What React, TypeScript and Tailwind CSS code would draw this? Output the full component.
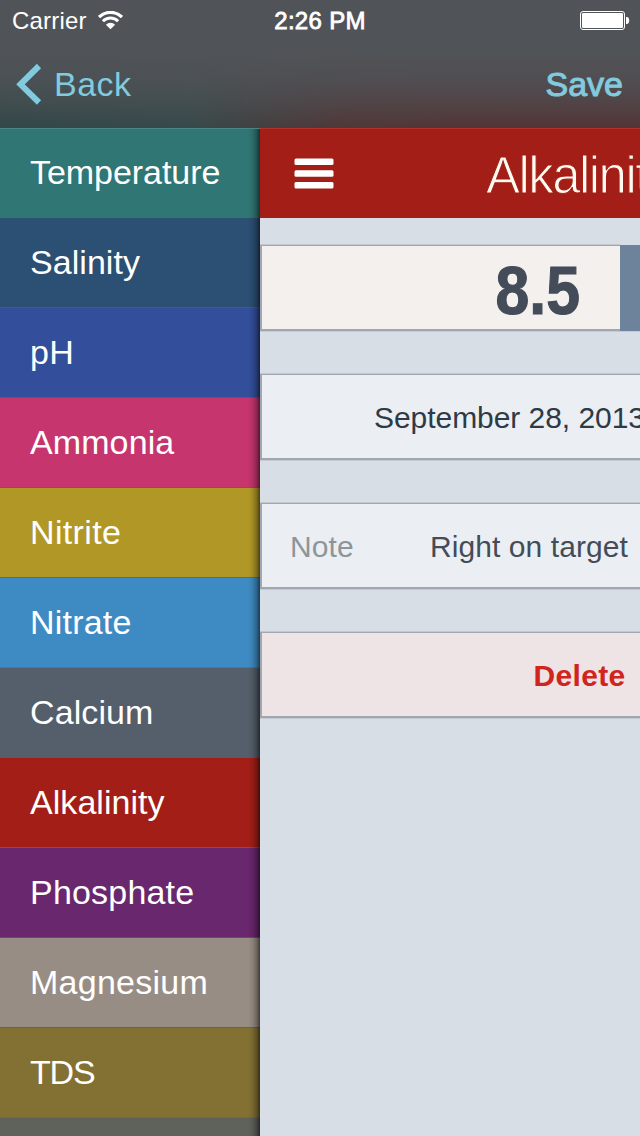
import type { ReactNode } from "react";

type Item = { name: string; color: string; line: string; spacing: string };

const items: Item[] = [
  { name: "Temperature", color: "bg-[#2f7674]", line: "border-[#4a6b68]", spacing: "tracking-[-0.05px]" },
  { name: "Salinity", color: "bg-[#2c4f74]", line: "border-[#4f5a66]", spacing: "tracking-[0.05px]" },
  { name: "pH", color: "bg-[#334f9b]", line: "border-[#5a5873]", spacing: "tracking-[0.4px]" },
  { name: "Ammonia", color: "bg-[#c6356e]", line: "border-[#83505f]", spacing: "tracking-[0.1px]" },
  { name: "Nitrite", color: "bg-[#b19826]", line: "border-[#6f6a4e]", spacing: "tracking-[0.35px]" },
  { name: "Nitrate", color: "bg-[#3e8bc3]", line: "border-[#52768e]", spacing: "tracking-[0.2px]" },
  { name: "Calcium", color: "bg-[#555e6b]", line: "border-[#66584f]", spacing: "tracking-[0.1px]" },
  { name: "Alkalinity", color: "bg-[#a31e16]", line: "border-[#7b5151]", spacing: "tracking-[0.05px]" },
  { name: "Phosphate", color: "bg-[#69276d]", line: "border-[#645064]", spacing: "tracking-[0.2px]" },
  { name: "Magnesium", color: "bg-[#988d84]", line: "border-[#65625f]", spacing: "tracking-[0.25px]" },
  { name: "TDS", color: "bg-[#837133]", line: "border-[#726b42]", spacing: "tracking-[-1.2px]" },
];

function StatusBar() {
  return (
    <div className="flex h-10 items-center text-white">
      <div className="flex w-[260px] items-center pl-3">
        <span className="w-[86px] pt-px text-[24px] leading-10 tracking-[0.2px]">Carrier</span>
        <svg className="h-[19px] w-[25px]" viewBox="0 0 25 19" fill="none">
          <path d="M1 6.100a16.300 16.300 0 0 1 23 0" stroke="white" strokeWidth="3.200" />
          <path d="M4.900 10.200a10.800 10.800 0 0 1 15.200 0" stroke="white" strokeWidth="3" />
          <path d="M7.900 13.700a6.300 6.300 0 0 1 9.200 0L12.500 18.200z" fill="white" />
        </svg>
      </div>
      <div className="w-[120px] pt-px text-center text-[24px] leading-10 tracking-[0.3px] [-webkit-text-stroke:0.8px_white]">
        2:26 PM
      </div>
      <div className="flex flex-1 justify-end pr-[10px]">
        <svg className="h-5 w-[50px]" viewBox="0 0 50 20" fill="none">
          <rect x="0.5" y="1.5" width="44" height="18" rx="2.5" stroke="white" />
          <rect x="2" y="3" width="41" height="15" rx="1.2" fill="white" />
          <path d="M46 7h.8c1.6 0 2.4 1.6 2.4 3.5S48.400 14 46.800 14H46z" fill="white" />
        </svg>
      </div>
    </div>
  );
}

function NavBar() {
  return (
    <div className="flex h-[88px] items-center justify-between pr-[17px] pl-4 text-[#82cade]">
      <div className="flex items-center gap-3">
        <svg className="h-[42px] w-[26px]" viewBox="0 0 26 42" fill="none">
          <path d="M23 3L4.500 21.300L23 39.500" stroke="#82cade" strokeWidth="6" />
        </svg>
        <span className="text-[34px] leading-10 tracking-[0.45px]">Back</span>
      </div>
      <span className="text-[34px] leading-10 [-webkit-text-stroke:1px_#82cade]">Save</span>
    </div>
  );
}

function Card({ tone, children }: { tone: string; children: ReactNode }) {
  return (
    <div
      className={`flex h-[86px] w-[640px] items-center border-t border-b-2 border-l-2 border-[#a0a7b3] pt-0.5 shadow-[0_1px_0_#c5cad1,0_-1px_0_#c3c8cf] ${tone}`}
    >
      {children}
    </div>
  );
}

export default function App() {
  return (
    <div className="flex h-[1136px] w-[640px] flex-col overflow-hidden bg-[#d7dee6] font-['Liberation_Sans',Arial,sans-serif]">
      <header className="h-32 shrink-0 bg-[linear-gradient(180deg,#505357_0%,#505357_42%,rgba(80,83,87,0.85)_60%,rgba(80,83,87,0.5)_80%,rgba(80,83,87,0)_100%),linear-gradient(90deg,#324748_0%,#37494a_30%,#424041_40%,#4f3839_52%,#533536_70%,#533536_100%)]">
        <StatusBar />
        <NavBar />
      </header>

      <div className="flex min-h-0 flex-1">
        <nav className="relative w-[260px] shrink-0 overflow-hidden bg-[#5f615b]">
          <div className="absolute inset-x-0 top-0 z-10 h-px bg-[#488685]" />
          {items.map((item) => (
            <div key={item.name} className={`flex h-[90px] items-center border-b pb-0.5 pl-[30px] ${item.color} ${item.line}`}>
              <span className={`text-[34px] leading-10 text-white ${item.spacing}`}>{item.name}</span>
            </div>
          ))}
          <div className="absolute inset-y-0 right-0 w-[12px] bg-[linear-gradient(90deg,rgba(0,0,0,0)_0%,rgba(0,0,0,0.08)_35%,rgba(0,0,0,0.27)_70%,rgba(0,0,0,0.58)_100%)]" />
        </nav>

        <main className="min-w-0 flex-1 overflow-hidden">
          <div className="flex h-[90px] w-[640px] items-center border-t border-[#b33229] bg-[#a31e16]">
            <svg className="ml-[34px] h-8 w-10 shrink-0" viewBox="0 0 40 32">
              <rect x="0.500" y="0.500" width="39" height="6.500" rx="1.500" fill="white" />
              <rect x="0.500" y="12.200" width="39" height="6.500" rx="1.500" fill="white" />
              <rect x="0.500" y="23.900" width="39" height="6.500" rx="1.500" fill="white" />
            </svg>
            <h1 className="ml-[152px] pt-[4px] text-[51px] leading-[60px] font-normal tracking-[-1.55px] whitespace-nowrap text-[#fffbf0] [-webkit-text-stroke:1.100px_#a31e16]">
              Alkalinity
            </h1>
          </div>

          <div className="flex flex-col gap-[43px] pt-[27px]">
            <div className="flex w-[640px]">
              <div className="flex h-[86px] w-[360px] items-center justify-end border-t border-b-2 border-l-2 border-[#a0a7b3] bg-[#f4f0ed] pr-[40px] shadow-[0_1px_0_#c5cad1,0_-1px_0_#c3c8cf]">
                <span className="origin-right scale-x-[0.88] pt-[7px] text-[69px] leading-[80px] font-bold text-[#434c58] [-webkit-text-stroke:1.200px_#434c58]">
                  8.5
                </span>
              </div>
              <div className="h-[86px] flex-1 bg-[#6d829b] shadow-[0_1px_0_#c5cad1]" />
            </div>
            <Card tone="bg-[#ebeff3]">
              <span className="ml-[112px] text-[30px] leading-10 tracking-[-0.05px] whitespace-nowrap text-[#2e3a45]">
                September 28, 2013
              </span>
            </Card>
            <Card tone="bg-[#ebeff3]">
              <span className="ml-7 w-[140px] text-[30px] leading-10 tracking-[0.1px] text-[#8d959a]">Note</span>
              <span className="text-[30px] leading-10 tracking-[0.08px] whitespace-nowrap text-[#434c58]">Right on target</span>
            </Card>
            <Card tone="bg-[#eee3e5]">
              <span className="ml-[271.500px] text-[30px] leading-10 font-bold tracking-[0.35px] text-[#d0241c]">Delete</span>
            </Card>
          </div>
        </main>
      </div>
    </div>
  );
}
